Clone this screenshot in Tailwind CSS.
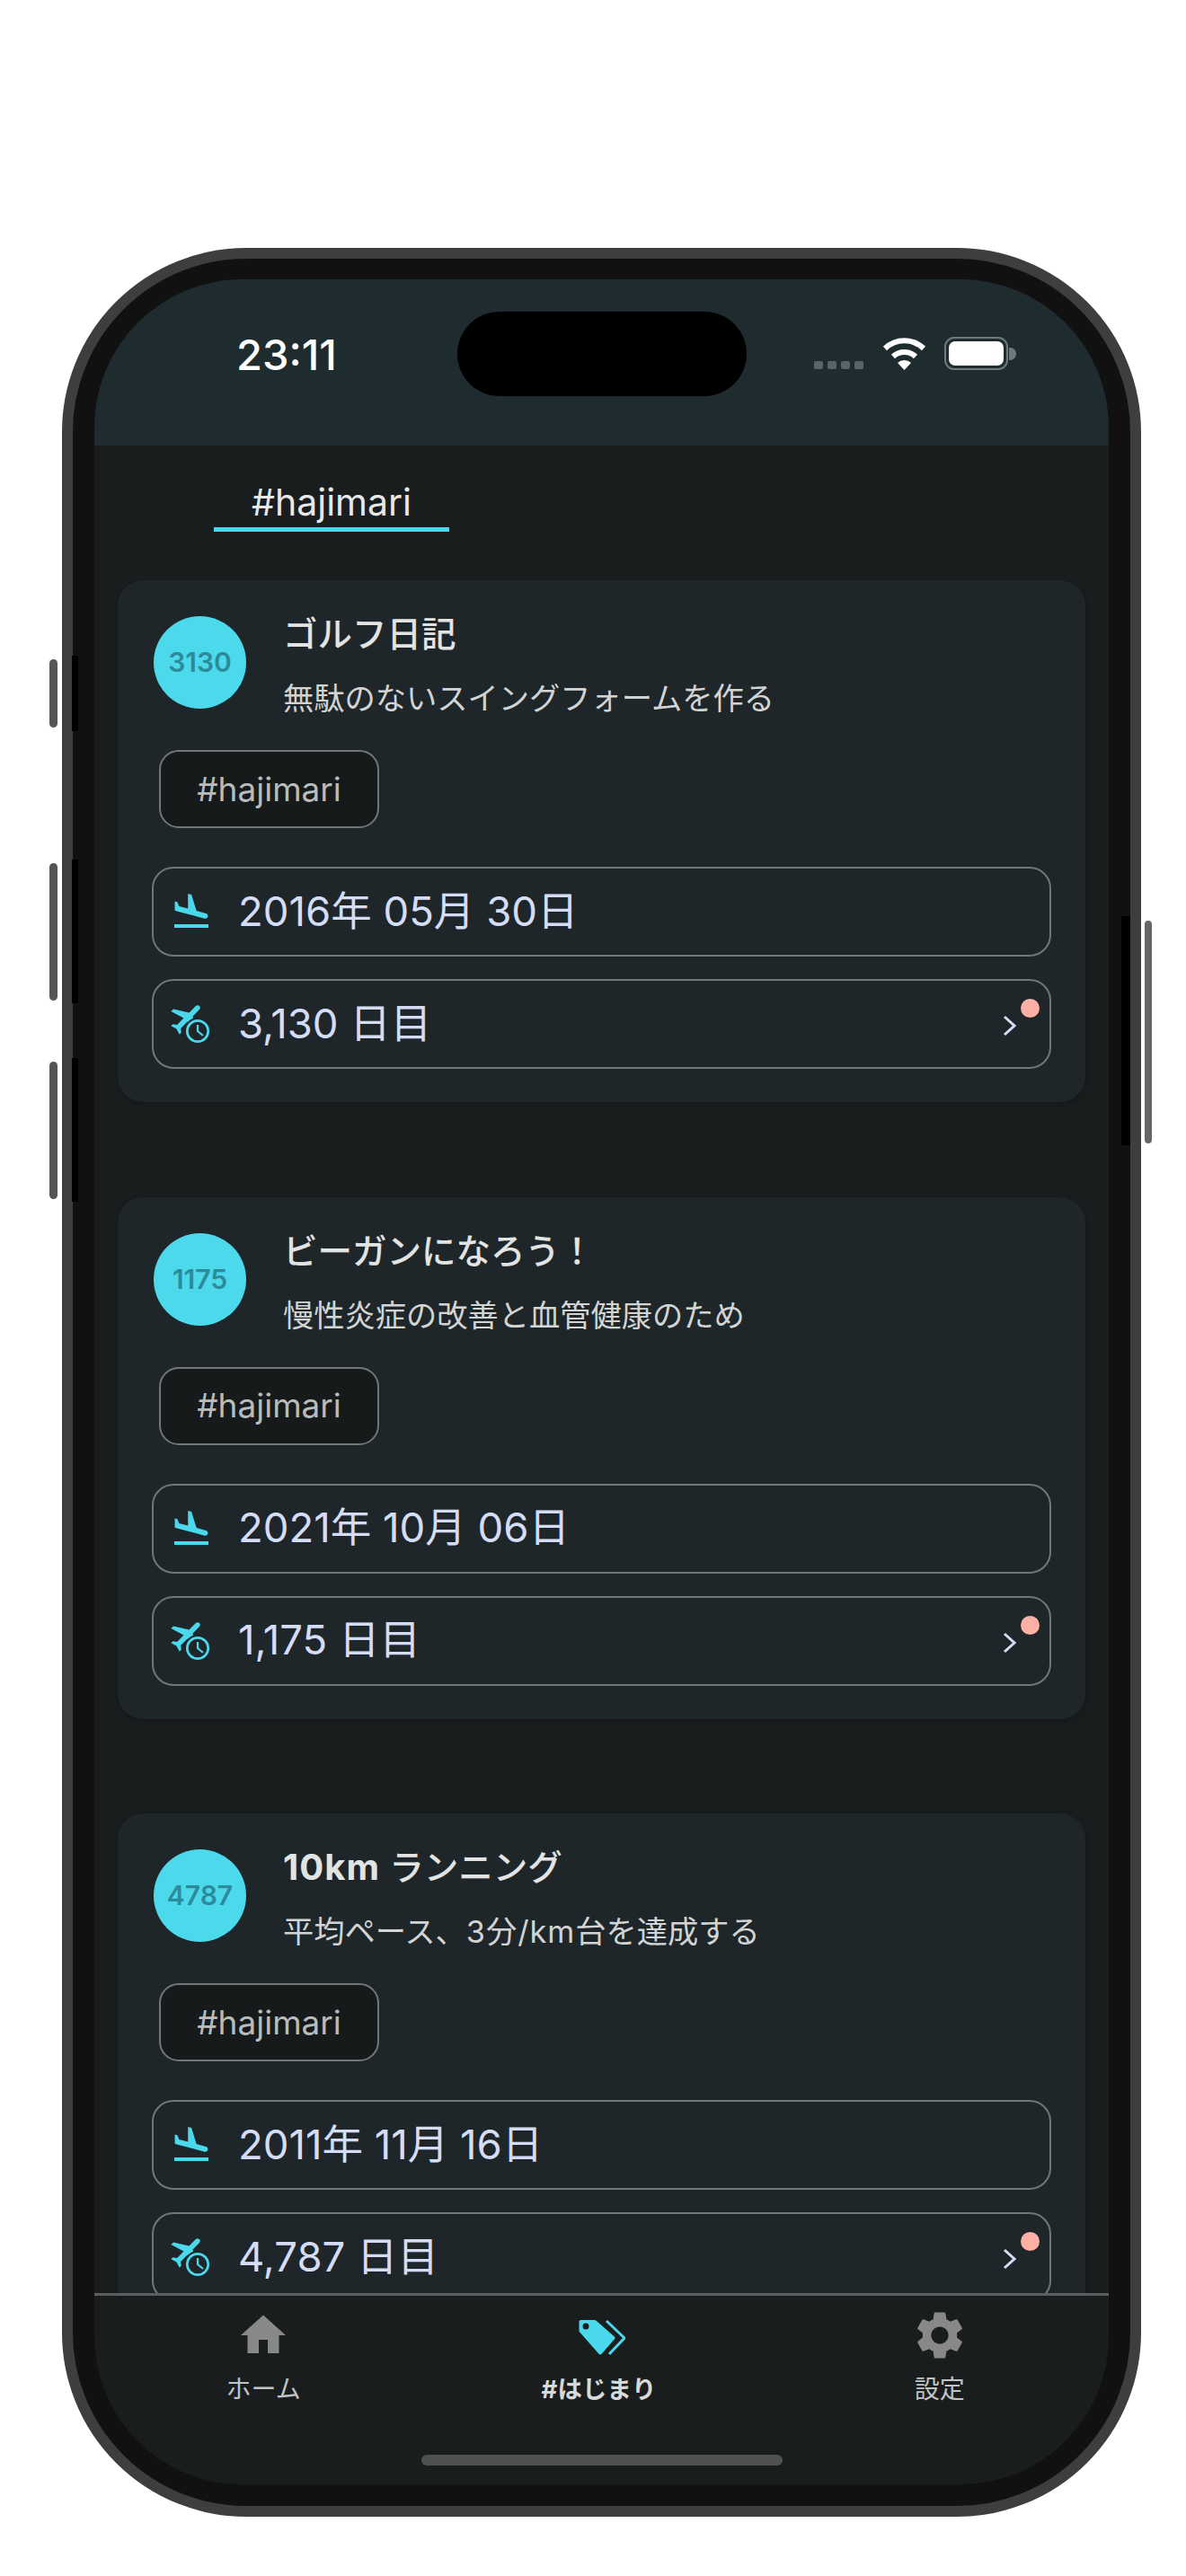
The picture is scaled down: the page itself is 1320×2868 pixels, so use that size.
<!DOCTYPE html>
<html lang="ja">
<head>
    <meta charset="UTF-8">
    <meta name="viewport" content="width=device-width, initial-scale=1.0">
    <title>hajimari</title>
    <script src="https://cdn.jsdelivr.net/npm/@tailwindcss/browser@4"></script>
</head>
<body class="min-h-screen bg-white pt-[276px] pl-[69px] font-['Inter','Noto_Sans_CJK_JP',sans-serif]">
    <!-- phone frame -->
    <div class="relative w-[1201px] h-[2526px] box-border border-[12px] border-[#3e3e3e] bg-[#111111] rounded-[205px] pt-[23px] px-[24px] pb-[24px]">
        <!-- hardware buttons -->
        <div class="absolute left-[-26px] top-[446px] w-[9px] h-[76px] rounded-full bg-[#555555]"></div>
        <div class="absolute left-[-26px] top-[673px] w-[9px] h-[153px] rounded-full bg-[#555555]"></div>
        <div class="absolute left-[-26px] top-[894px] w-[9px] h-[153px] rounded-full bg-[#555555]"></div>
        <div class="absolute right-[-24px] top-[737px] w-[8px] h-[248px] rounded-full bg-[#666666]"></div>
        <div class="absolute left-[-1px] top-[442px] w-[7px] h-[84px] bg-black"></div>
        <div class="absolute left-[-1px] top-[669px] w-[7px] h-[160px] bg-black"></div>
        <div class="absolute left-[-1px] top-[890px] w-[7px] h-[160px] bg-black"></div>
        <div class="absolute right-0 top-[732px] w-[10px] h-[255px] bg-black"></div>

        <!-- screen -->
        <div class="flex flex-col h-full overflow-hidden rounded-[165px] bg-[#191d1e]">
            <!-- status bar -->
            <header class="shrink-0 h-[185px] bg-[#1e2c2f] pt-[36px]">
                <div class="flex items-center h-[94px] pl-[158px]">
                    <span class="w-[246px] text-[47px] leading-none font-medium text-white">23:11</span>
                    <div class="w-[322px] h-[94px] rounded-[47px] bg-black"></div>
                    <div class="flex gap-[5px] ml-[75px] mt-[24px]">
                        <i class="block w-[10px] h-[9px] rounded-[2px] bg-[#596466]"></i>
                        <i class="block w-[10px] h-[9px] rounded-[2px] bg-[#596466]"></i>
                        <i class="block w-[10px] h-[9px] rounded-[2px] bg-[#596466]"></i>
                        <i class="block w-[10px] h-[9px] rounded-[2px] bg-[#596466]"></i>
                    </div>
                    <svg class="ml-[21px] mt-[-2px]" width="49" height="37" viewBox="0 0 49 37" fill="none">
                        <path d="M3 13A31 31 0 0 1 46 13" stroke="#fff" stroke-width="6"/>
                        <path d="M12 22A18 18 0 0 1 37 22" stroke="#fff" stroke-width="6"/>
                        <path d="M17 29a11 11 0 0 1 15 0L24.500 37z" fill="#fff"/>
                    </svg>
                    <div class="relative ml-[20px] mt-[-2px] w-[71px] h-[37px] box-border border-2 border-[#6e7a7c] rounded-[11px] p-[3px]">
                        <div class="h-full rounded-[7px] bg-white"></div>
                        <div class="absolute right-[-11px] top-[10px] w-[8px] h-[14px] rounded-r-full bg-[#6e7a7c]"></div>
                    </div>
                </div>
            </header>

            <!-- tab -->
            <div class="shrink-0 h-[150px] pt-[39px] pl-[133px]">
                <div class="w-[262px]">
                    <div class="text-center text-[41px] leading-[48px] text-[#e8e8e8]">#hajimari</div>
                    <div class="mt-[4px] h-[5px] bg-[#4ad8ec]"></div>
                </div>
            </div>

            <!-- cards -->
            <main class="flex-1 min-h-0 overflow-hidden pl-[26px] pr-[26px] flex flex-col gap-[105.500px]">
                <section class="shrink-0 rounded-[28px] bg-[#1e2629] shadow-[0_2px_6px_rgba(0,0,0,0.2)] pt-[40px] pb-[37px]">
                    <div class="flex pl-[40px] gap-[41px]">
                        <div class="flex items-center justify-center w-[103px] h-[103px] rounded-full bg-[#4cd9ec] text-[30px] font-semibold text-[#2c8b9b]">3130</div>
                        <div>
                            <h2 class="text-[38.500px] leading-[40px] font-medium text-[#e2e3e3]">ゴルフ日記</h2>
                            <p class="mt-[32px] text-[34.250px] leading-[40px] text-[#d2d4d4]">無駄のないスイングフォームを作る</p>
                        </div>
                    </div>
                    <div class="flex items-center justify-center ml-[46px] mt-[37px] w-[245px] h-[87px] rounded-[22px] border-2 border-[#717676] bg-[#161a1b] text-[37px] text-[#b9bcbc]">#hajimari</div>
                    <div class="flex items-center mx-[38px] mt-[43px] h-[100px] rounded-[24px] border-2 border-[#717676] pl-[18px] gap-[28px] text-[45.500px] text-[#d5dcf5]">
                        <svg width="48" height="48" viewBox="0 0 24 24" fill="#4ad8ec"><path d="M2.500 19h19v2h-19zm7.180-5.730l4.350 1.160 5.310 1.420c.8.210 1.620-.260 1.840-1.060.210-.8-.260-1.620-1.060-1.840l-5.310-1.420-2.760-9.020L10.120 2v8.280L5.150 8.950l-.93-2.320-1.450-.39v5.170l1.600.430 5.310 1.430z"/></svg>
                        <span>2016年 05月 30日</span>
                    </div>
                    <div class="relative flex items-center mx-[38px] mt-[25px] h-[100px] rounded-[24px] border-2 border-[#717676] pl-[18px] gap-[28px] text-[45.500px] text-[#d5dcf5]">
                        <svg width="48" height="48" viewBox="0 0 48 48" fill="none">
                            <path fill="#4ad8ec" transform="translate(19.500 17.500) rotate(45) scale(1.900) translate(-11.500 -12)" d="M21 16v-2l-8-5V3.500c0-.83-.67-1.500-1.500-1.500S10 2.670 10 3.500V9l-8 5v2l8-2.500V19l-2 1.500V22l3.500-1 3.500 1v-1.500L13 19v-5.500l8 2.500z"/>
                            <circle cx="31" cy="32" r="15" fill="#1e2629"/>
                            <circle cx="31" cy="32" r="11.700" stroke="#4ad8ec" stroke-width="2.700"/>
                            <path d="M31 25v7l6 5" stroke="#4ad8ec" stroke-width="2.200"/>
                        </svg>
                        <span>3,130 日目</span>
                        <svg class="absolute right-[36px] top-[38px]" width="16" height="24" viewBox="0 0 16 24" fill="none"><path d="M2 2l11 10L2 22" stroke="#d5dcf5" stroke-width="3"/></svg>
                        <i class="absolute right-[11px] top-[20px] block w-[21px] h-[21px] rounded-full bg-[#ffb0a4]"></i>
                    </div>
                </section>

                <section class="shrink-0 rounded-[28px] bg-[#1e2629] shadow-[0_2px_6px_rgba(0,0,0,0.2)] pt-[40px] pb-[37px]">
                    <div class="flex pl-[40px] gap-[41px]">
                        <div class="flex items-center justify-center w-[103px] h-[103px] rounded-full bg-[#4cd9ec] text-[30px] font-semibold text-[#2c8b9b]">1175</div>
                        <div>
                            <h2 class="text-[38.500px] leading-[40px] font-medium text-[#e2e3e3]">ビーガンになろう！</h2>
                            <p class="mt-[32px] text-[34.250px] leading-[40px] text-[#d2d4d4]">慢性炎症の改善と血管健康のため</p>
                        </div>
                    </div>
                    <div class="flex items-center justify-center ml-[46px] mt-[37px] w-[245px] h-[87px] rounded-[22px] border-2 border-[#717676] bg-[#161a1b] text-[37px] text-[#b9bcbc]">#hajimari</div>
                    <div class="flex items-center mx-[38px] mt-[43px] h-[100px] rounded-[24px] border-2 border-[#717676] pl-[18px] gap-[28px] text-[45.500px] text-[#d5dcf5]">
                        <svg width="48" height="48" viewBox="0 0 24 24" fill="#4ad8ec"><path d="M2.500 19h19v2h-19zm7.180-5.730l4.350 1.160 5.310 1.420c.8.210 1.620-.260 1.840-1.060.210-.8-.260-1.620-1.060-1.840l-5.310-1.420-2.760-9.020L10.120 2v8.280L5.150 8.950l-.93-2.320-1.450-.39v5.170l1.600.430 5.310 1.430z"/></svg>
                        <span>2021年 10月 06日</span>
                    </div>
                    <div class="relative flex items-center mx-[38px] mt-[25px] h-[100px] rounded-[24px] border-2 border-[#717676] pl-[18px] gap-[28px] text-[45.500px] text-[#d5dcf5]">
                        <svg width="48" height="48" viewBox="0 0 48 48" fill="none">
                            <path fill="#4ad8ec" transform="translate(19.500 17.500) rotate(45) scale(1.900) translate(-11.500 -12)" d="M21 16v-2l-8-5V3.500c0-.83-.67-1.500-1.500-1.500S10 2.670 10 3.500V9l-8 5v2l8-2.500V19l-2 1.500V22l3.500-1 3.500 1v-1.500L13 19v-5.500l8 2.500z"/>
                            <circle cx="31" cy="32" r="15" fill="#1e2629"/>
                            <circle cx="31" cy="32" r="11.700" stroke="#4ad8ec" stroke-width="2.700"/>
                            <path d="M31 25v7l6 5" stroke="#4ad8ec" stroke-width="2.200"/>
                        </svg>
                        <span>1,175 日目</span>
                        <svg class="absolute right-[36px] top-[38px]" width="16" height="24" viewBox="0 0 16 24" fill="none"><path d="M2 2l11 10L2 22" stroke="#d5dcf5" stroke-width="3"/></svg>
                        <i class="absolute right-[11px] top-[20px] block w-[21px] h-[21px] rounded-full bg-[#ffb0a4]"></i>
                    </div>
                </section>

                <section class="shrink-0 rounded-[28px] bg-[#1e2629] shadow-[0_2px_6px_rgba(0,0,0,0.2)] pt-[40px] pb-[37px]">
                    <div class="flex pl-[40px] gap-[41px]">
                        <div class="flex items-center justify-center w-[103px] h-[103px] rounded-full bg-[#4cd9ec] text-[30px] font-semibold text-[#2c8b9b]">4787</div>
                        <div>
                            <h2 class="text-[38.500px] leading-[40px] font-medium text-[#e2e3e3]"><span class="text-[40px] tracking-[1px] font-bold">10km</span> ランニング</h2>
                            <p class="mt-[32px] text-[34.250px] leading-[40px] text-[#d2d4d4]">平均ペース、<span class="tracking-[1px]">3分/km</span>台を達成する</p>
                        </div>
                    </div>
                    <div class="flex items-center justify-center ml-[46px] mt-[37px] w-[245px] h-[87px] rounded-[22px] border-2 border-[#717676] bg-[#161a1b] text-[37px] text-[#b9bcbc]">#hajimari</div>
                    <div class="flex items-center mx-[38px] mt-[43px] h-[100px] rounded-[24px] border-2 border-[#717676] pl-[18px] gap-[28px] text-[45.500px] text-[#d5dcf5]">
                        <svg width="48" height="48" viewBox="0 0 24 24" fill="#4ad8ec"><path d="M2.500 19h19v2h-19zm7.180-5.730l4.350 1.160 5.310 1.420c.8.210 1.620-.260 1.840-1.060.210-.8-.260-1.620-1.060-1.840l-5.310-1.420-2.760-9.020L10.120 2v8.280L5.150 8.950l-.93-2.320-1.450-.39v5.170l1.600.430 5.310 1.430z"/></svg>
                        <span>2011年 11月 16日</span>
                    </div>
                    <div class="relative flex items-center mx-[38px] mt-[25px] h-[100px] rounded-[24px] border-2 border-[#717676] pl-[18px] gap-[28px] text-[45.500px] text-[#d5dcf5]">
                        <svg width="48" height="48" viewBox="0 0 48 48" fill="none">
                            <path fill="#4ad8ec" transform="translate(19.500 17.500) rotate(45) scale(1.900) translate(-11.500 -12)" d="M21 16v-2l-8-5V3.500c0-.83-.67-1.500-1.500-1.500S10 2.670 10 3.500V9l-8 5v2l8-2.500V19l-2 1.500V22l3.500-1 3.500 1v-1.500L13 19v-5.500l8 2.500z"/>
                            <circle cx="31" cy="32" r="15" fill="#1e2629"/>
                            <circle cx="31" cy="32" r="11.700" stroke="#4ad8ec" stroke-width="2.700"/>
                            <path d="M31 25v7l6 5" stroke="#4ad8ec" stroke-width="2.200"/>
                        </svg>
                        <span>4,787 日目</span>
                        <svg class="absolute right-[36px] top-[38px]" width="16" height="24" viewBox="0 0 16 24" fill="none"><path d="M2 2l11 10L2 22" stroke="#d5dcf5" stroke-width="3"/></svg>
                        <i class="absolute right-[11px] top-[20px] block w-[21px] h-[21px] rounded-full bg-[#ffb0a4]"></i>
                    </div>
                </section>
            </main>

            <!-- bottom nav -->
            <nav class="relative shrink-0 h-[213px] box-border border-t-[3px] border-[#5a5e5f] bg-[#191d1e] grid grid-cols-3 pt-[14px]">
                <div class="flex flex-col items-center">
                    <svg width="60" height="60" viewBox="0 0 24 24" fill="#888888"><path d="M10 20v-6h4v6h5v-8h3L12 3 2 12h3v8z"/></svg>
                    <span class="mt-[14px] text-[28px] leading-[32px] text-[#c0c4c4]">ホーム</span>
                </div>
                <div class="flex flex-col items-center pr-[6px]">
                    <svg width="60" height="60" viewBox="-6 -8 60 60" fill="none">
                        <path d="M4.500 7h15.500L40.500 25 26 41.500 4.500 17z" fill="#4ad8ec" stroke="#4ad8ec" stroke-width="4" stroke-linejoin="round"/>
                        <circle cx="10" cy="12" r="3.500" fill="#191d1e"/>
                        <path d="M33 6l20 19-17 18" stroke="#4ad8ec" stroke-width="3"/>
                    </svg>
                    <span class="mt-[14px] text-[27.500px] leading-[32px] font-bold text-[#d8dada]">#はじまり</span>
                </div>
                <div class="flex flex-col items-center">
                    <svg class="mt-[-2px] mb-[-2px]" width="64" height="64" viewBox="0 0 24 24" fill="#888888"><path d="M19.140 12.940c.04-.3.06-.61.06-.94 0-.32-.02-.64-.07-.94l2.030-1.580c.18-.14.23-.41.12-.61l-1.920-3.320c-.12-.22-.37-.29-.59-.22l-2.390.96c-.5-.38-1.030-.7-1.620-.94l-.36-2.540c-.04-.24-.24-.41-.48-.41h-3.840c-.24 0-.43.17-.47.41l-.36 2.540c-.59.24-1.130.57-1.620.94l-2.390-.96c-.22-.08-.47 0-.59.22L2.740 8.870c-.12.21-.08.47.12.61l2.030 1.580c-.05.3-.09.63-.09.94s.02.64.07.94l-2.030 1.580c-.18.14-.23.41-.12.61l1.920 3.320c.12.22.37.29.59.22l2.390-.96c.5.38 1.030.7 1.620.94l.36 2.540c.05.24.24.41.48.41h3.840c.24 0 .44-.17.47-.41l.36-2.540c.59-.24 1.130-.56 1.620-.94l2.390.96c.22.08.47 0 .59-.22l1.920-3.320c.12-.22.07-.47-.12-.61l-2.010-1.580zM12 15.600c-1.980 0-3.600-1.620-3.600-3.600s1.620-3.600 3.600-3.600 3.600 1.620 3.600 3.600-1.620 3.600-3.600 3.600z"/></svg>
                    <span class="mt-[14px] text-[28px] leading-[32px] text-[#c0c4c4]">設定</span>
                </div>
                <div class="absolute left-[364px] bottom-[21px] w-[402px] h-[12px] rounded-full bg-[#4f5151]"></div>
            </nav>
        </div>
    </div>
</body>
</html>
